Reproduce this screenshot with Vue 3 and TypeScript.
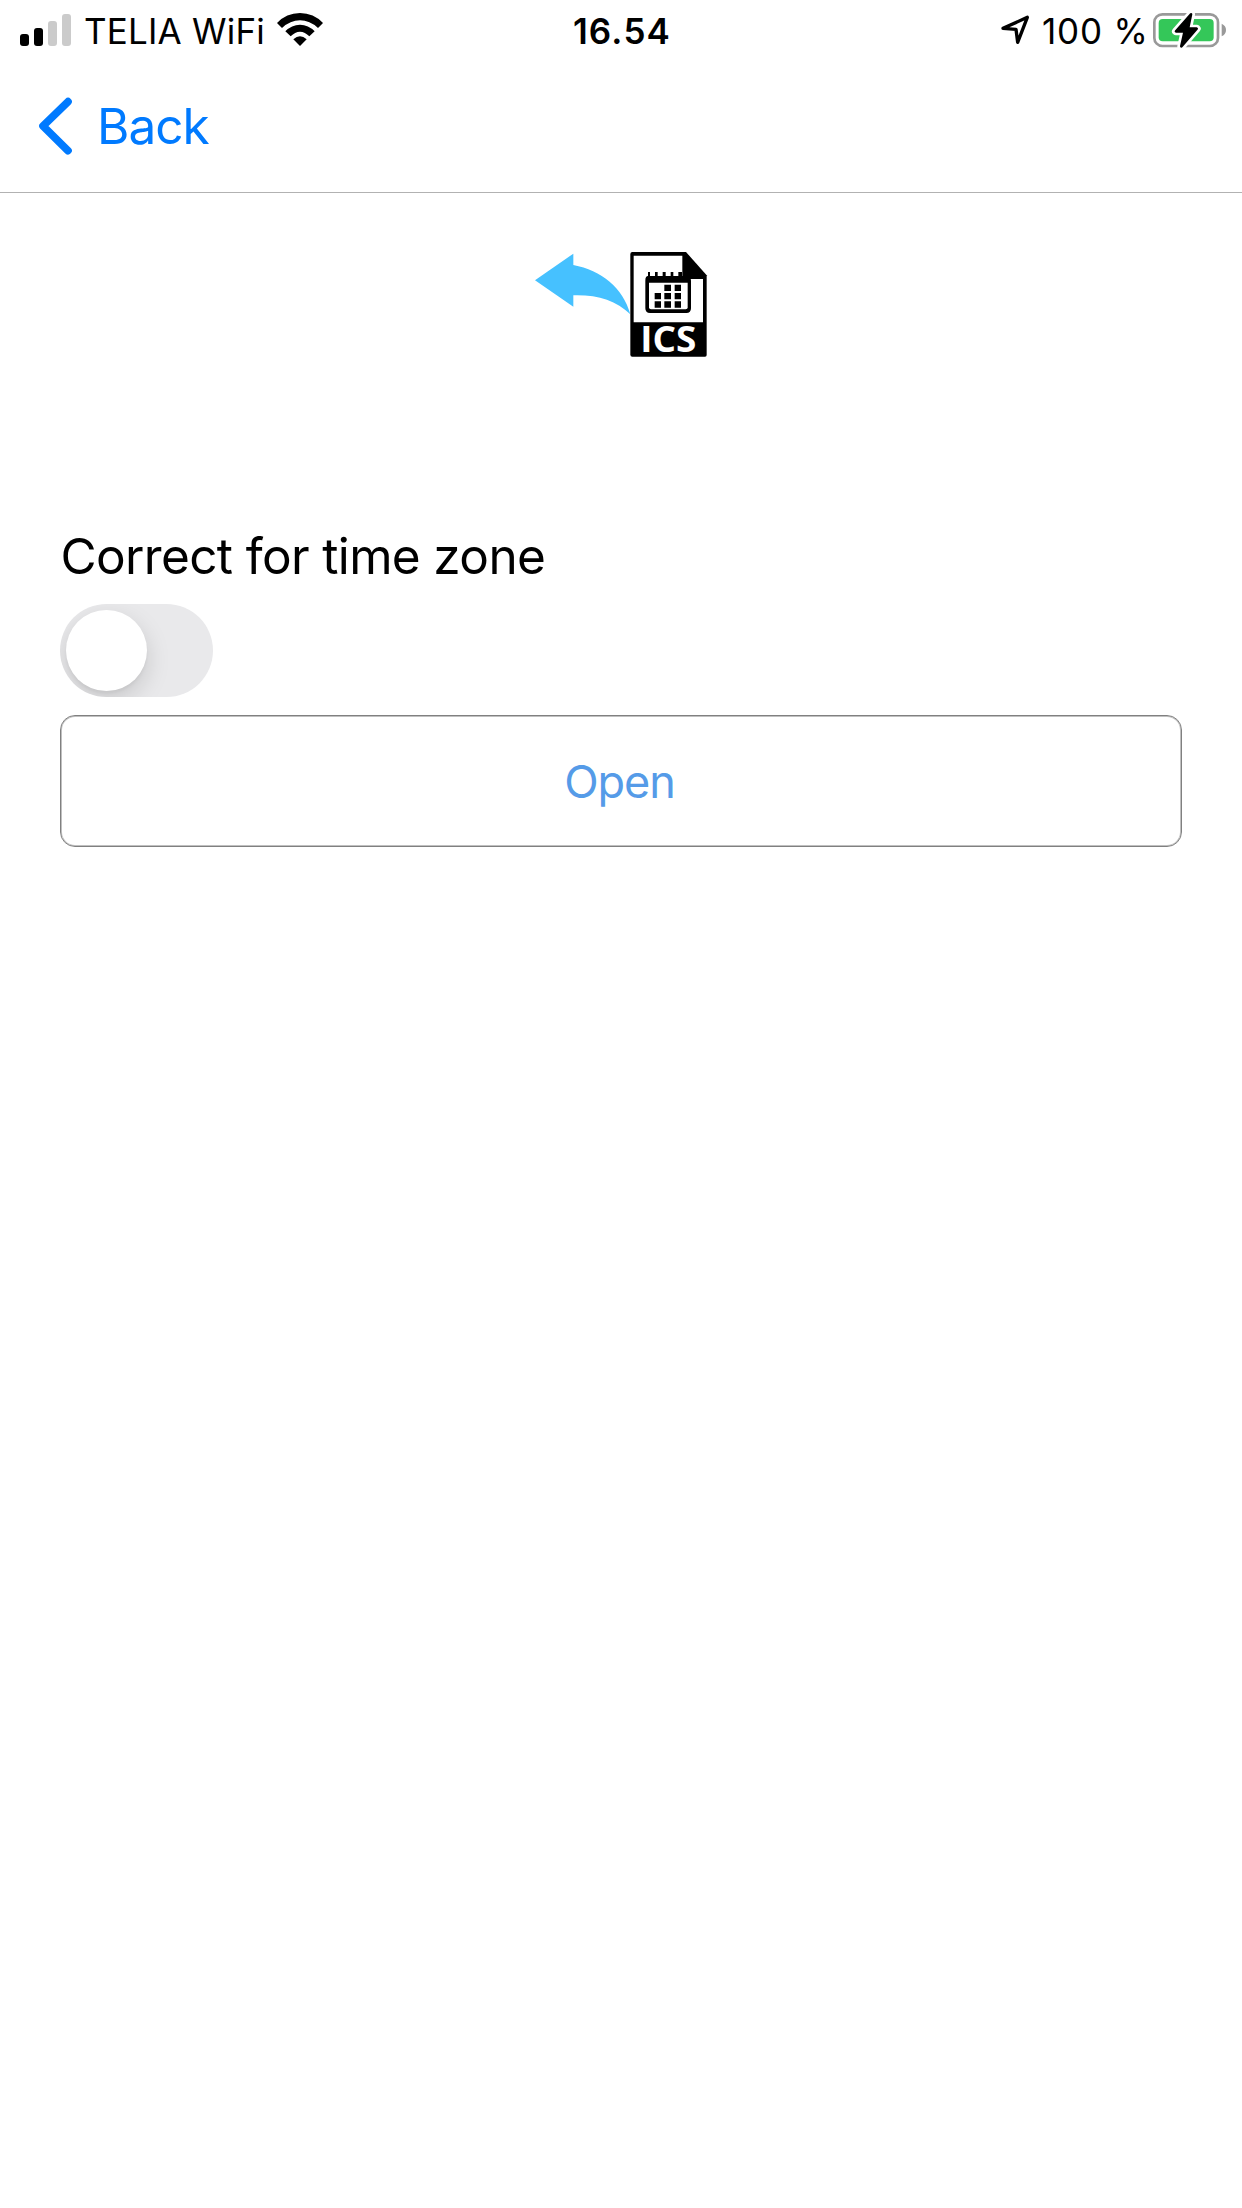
<script setup lang="ts">
import { ref } from 'vue'

const carrier = 'TELIA WiFi'
const time = '16.54'
const battery = '100 %'
const correctTimeZone = ref<boolean>(false)
</script>

<template>
  <div class="screen">
    <header class="status">
      <div class="side left">
        <svg class="signal" width="52" height="34" viewBox="0 0 156 102">
          <rect x="0" y="63" width="27" height="36" rx="9" fill="#000" />
          <rect x="42" y="45" width="27" height="54" rx="9" fill="#000" />
          <rect x="84" y="24" width="27" height="75" rx="9" fill="#cbcbcb" />
          <rect x="126" y="3" width="27" height="96" rx="9" fill="#cbcbcb" />
        </svg>
        <span class="carrier">{{ carrier }}</span>
        <svg class="wifi" width="46" height="34" viewBox="0 0 138 102">
          <path d="M0 30Q28 0 69 0T138 30L123 45Q98 22 69 22T15 45Z" />
          <path d="M25 55Q44 35 69 35T113 55L97 70Q84 56 69 56T41 70Z" />
          <path d="M49 79Q69 61 89 79L69 99Z" />
        </svg>
      </div>
      <div class="clock">{{ time }}</div>
      <div class="side right">
        <svg class="location" width="30" height="32" viewBox="0 0 90 96">
          <path d="M6 43L79 10L50 85L45 46Z" fill="none" stroke="#000" stroke-width="10" stroke-linejoin="round" />
        </svg>
        <span class="percent">{{ battery }}</span>
        <svg class="battery" width="74" height="38" viewBox="0 0 222 114">
          <rect x="4" y="10" width="191" height="95" rx="24" fill="none" stroke="#999" stroke-width="8" />
          <path d="M206 38Q219 44 219 57T206 76Z" fill="#999" />
          <rect x="17" y="24" width="165" height="67" rx="12" fill="#34c759" />
          <path d="M114 10L69 61H95L85 106L131 53H105Z" fill="#fff" stroke="#fff" stroke-width="24" stroke-linejoin="round" />
          <path d="M114 10L69 61H95L85 106L131 53H105Z" fill="#000" stroke="#000" stroke-width="8" stroke-linejoin="round" />
        </svg>
      </div>
    </header>

    <nav class="nav">
      <button class="back" type="button">
        <svg width="36" height="60" viewBox="0 0 108 180">
          <path d="M90 17L15 90L90 164" fill="none" stroke="#007aff" stroke-width="23" stroke-linecap="round" stroke-linejoin="round" />
        </svg>
        <span>Back</span>
      </button>
    </nav>

    <main class="content">
      <svg class="logo" width="200" height="130" viewBox="0 0 600 390">
        <path d="M45 121L160 41V75C244 91 310 144 331 223C288 181 232 164 160 166V200Z" fill="#46c1ff" />
        <path d="M337 36H498L560 106V345Q560 350 555 350H337Q331 350 331 344V42Q331 36 337 36Z" fill="#000" />
        <path d="M341 47H487V117H549V247H341Z" fill="#fff" />
        <path d="M384 96h6v12h15v-12h8v12h15v-12h9v12h15v-12h8v12h15v-12h11v12h11q16 0 16 14v83q0 14-14 14H390q-14 0-14-14v-83q0-14 8-14Z" />
        <path d="M387 128H503V202Q503 208 497 208H393Q387 208 387 202Z" fill="#fff" />
        <path d="M433 134h20v19h-20ZM464 134h19v19h-19ZM404 159h19v19h-19ZM433 159h20v19h-20ZM464 159h19v19h-19ZM404 184h19v19h-19ZM433 184h20v19h-20ZM464 184h19v19h-19Z" />
        <text x="361" y="335" textLength="168" lengthAdjust="spacingAndGlyphs">ICS</text>
      </svg>

      <label class="label" for="zone">Correct for time zone</label>
      <button id="zone" class="toggle" type="button" role="switch" :aria-checked="correctTimeZone" @click="correctTimeZone = !correctTimeZone">
        <span class="knob" :class="{ on: correctTimeZone }"></span>
      </button>
      <button class="open" type="button"><span>Open</span></button>
    </main>
  </div>
</template>

<style>
body {
  background: #fff;
}
</style>

<style scoped>
.screen {
  box-sizing: border-box;
  width: 1242px;
  height: 2208px;
  overflow: hidden;
  background: #fff;
  color: #000;
  font-family: Inter, "Liberation Sans", sans-serif;
}
button {
  margin: 0;
  padding: 0;
  border: 0;
  background: none;
  font: inherit;
}
svg {
  display: block;
  flex: none;
}
.status {
  display: flex;
  height: 62px;
  font-size: 35px;
  line-height: 62px;
  white-space: nowrap;
}
.side {
  display: flex;
  flex: 1 1 0;
}
.left {
  padding-left: 20px;
}
.signal {
  margin-top: 13px;
}
.carrier {
  width: 193px;
  margin-left: 12px;
  letter-spacing: 0.2px;
}
.wifi {
  margin-top: 13px;
}
.clock {
  margin-right: 3px;
  font-weight: 600;
  letter-spacing: 1.2px;
}
.right {
  justify-content: flex-end;
  padding-right: 15px;
}
.location {
  margin-top: 14px;
  margin-right: 11px;
}
.percent {
  width: 107px;
  margin-right: 4px;
  letter-spacing: 0.8px;
}
.battery {
  margin-top: 11px;
}
.nav {
  box-sizing: border-box;
  display: flex;
  align-items: flex-start;
  height: 131px;
  padding: 33px 0 0 38px;
  border-bottom: 1px solid #b2b2b2;
}
.back {
  display: flex;
  align-items: center;
  gap: 23px;
  color: #007aff;
  font-size: 49.5px;
  letter-spacing: -1px;
  line-height: 60px;
}
.back span {
  padding-top: 1px;
}
.content {
  display: flex;
  flex-direction: column;
  align-items: flex-start;
  padding: 47px 60px 0;
}
.logo {
  align-self: center;
  margin-right: 2px;
}
.logo text {
  fill: #fff;
  font-family: "Open Sans", "Noto Sans", sans-serif;
  font-size: 108px;
  font-weight: 700;
}
.label {
  margin-top: 156px;
  margin-left: 0.5px;
  font-size: 49.5px;
  letter-spacing: -0.64px;
  line-height: 60px;
  white-space: nowrap;
}
.toggle {
  display: flex;
  width: 153px;
  height: 93px;
  margin-top: 18px;
  padding: 6px;
  overflow: hidden;
  border-radius: 47px;
  background: #e9e9eb;
}
.knob {
  width: 81px;
  height: 81px;
  border-radius: 50%;
  background: #fff;
  box-shadow: 0 9px 24px rgba(0, 0, 0, 0.15), 0 3px 3px rgba(0, 0, 0, 0.04);
}
.knob.on {
  margin-left: 60px;
}
.open {
  width: 100%;
  height: 132px;
  margin-top: 18px;
  padding-right: 3px;
  border: 1px solid #808080;
  border-radius: 15px;
  box-shadow: inset 0 0 0 1px #c0c0c0;
  color: #559be8;
  font-size: 45px;
  letter-spacing: -1.1px;
}
</style>
